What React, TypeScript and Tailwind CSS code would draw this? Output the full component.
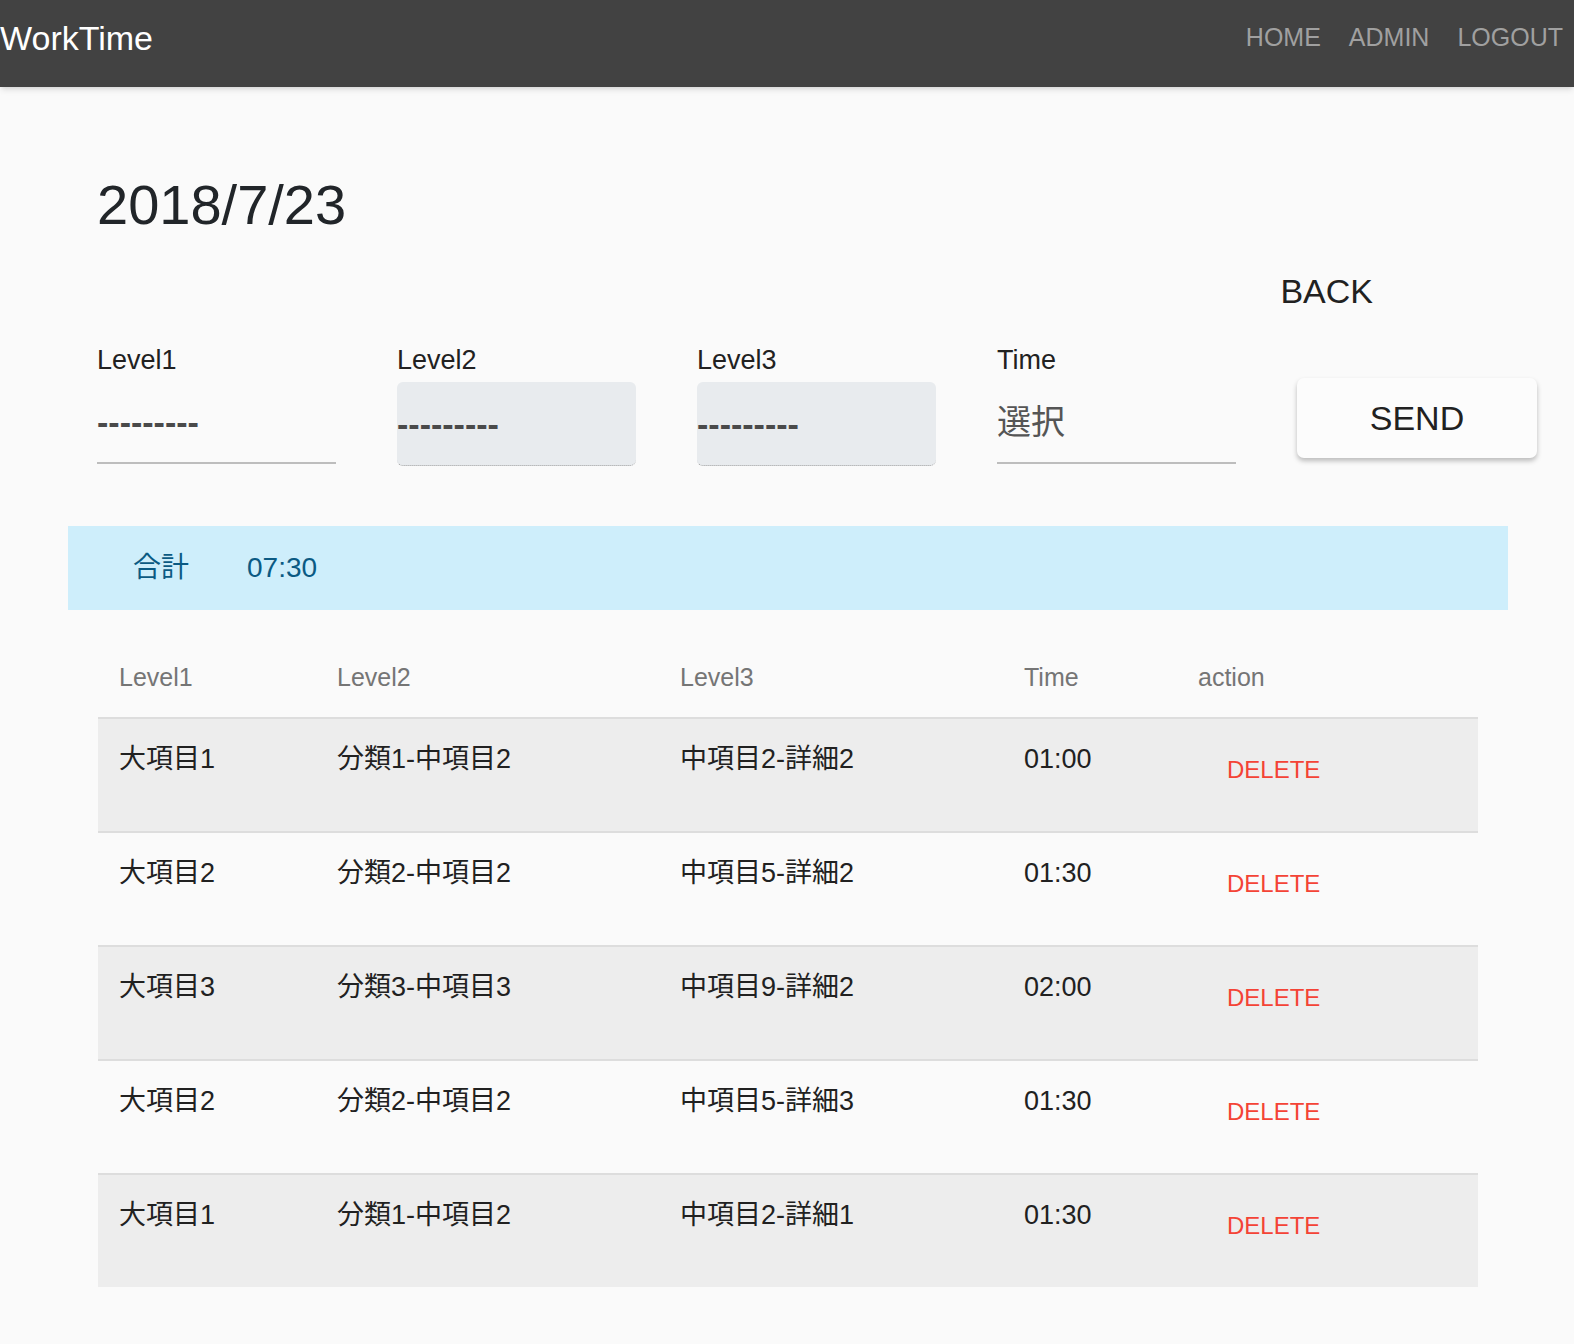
const rows = [
  { l1: '大項目1', l2: '分類1-中項目2', l3: '中項目2-詳細2', time: '01:00' },
  { l1: '大項目2', l2: '分類2-中項目2', l3: '中項目5-詳細2', time: '01:30' },
  { l1: '大項目3', l2: '分類3-中項目3', l3: '中項目9-詳細2', time: '02:00' },
  { l1: '大項目2', l2: '分類2-中項目2', l3: '中項目5-詳細3', time: '01:30' },
  { l1: '大項目1', l2: '分類1-中項目2', l3: '中項目2-詳細1', time: '01:30' },
];

const cols = 'grid grid-cols-[218px_343px_344px_174px_1fr]';

function Field({ label, value, disabled, dashed }: { label: string; value: string; disabled?: boolean; dashed?: boolean }) {
  const text = dashed ? 'font-bold text-[#4a4a4a]' : 'text-[#555]';
  return (
    <div className="flex flex-col">
      <label className="text-[27px] leading-[32px] text-[#212121]">{label}</label>
      <div
        className={
          disabled
            ? `mt-[6px] flex h-[84px] items-center rounded-[6px] border-b border-dotted border-[#9e9e9e] bg-[#e8ebee] text-[34px] leading-[34px] ${text}`
            : `mt-[6px] flex h-[82px] items-center border-b-2 border-[#bdbdbd] text-[34px] leading-[34px] ${text}`
        }
      >
        {value}
      </div>
    </div>
  );
}

export default function App() {
  return (
    <div
      className="min-h-screen bg-[#fafafa]"
      style={{ fontFamily: '"Liberation Sans", "Noto Sans CJK JP", sans-serif' }}
    >
      <header className="flex h-[87px] items-start justify-between bg-[#424242] shadow-md">
        <div className="pt-[18px] text-[34px] leading-[40px] text-white">WorkTime</div>
        <nav className="flex gap-[28px] pr-[11px] pt-[22px] text-[25px] leading-[30px] text-[#a0a0a0]">
          <a href="#">HOME</a>
          <a href="#">ADMIN</a>
          <a href="#">LOGOUT</a>
        </nav>
      </header>

      <h1 className="pl-[97px] pt-[90px] text-[56px] leading-[56px] text-[#212529]">2018/7/23</h1>

      <div className="mt-[38px] flex justify-end pr-[201px]">
        <button className="text-[34px] leading-[40px] text-[#212121]">BACK</button>
      </div>

      <div className="mt-[33px] grid grid-cols-[239px_239px_239px_239px_240px] gap-x-[61px] pl-[97px]">
        <Field label="Level1" value="---------" dashed />
        <Field label="Level2" value="---------" dashed disabled />
        <Field label="Level3" value="---------" dashed disabled />
        <Field label="Time" value="選択" />
        <div className="pt-[34px]">
          <button className="h-[80px] w-full rounded-[7px] bg-[#fcfcfc] text-[34px] text-[#212121] shadow-[0_3px_5px_rgba(0,0,0,0.25)]">
            SEND
          </button>
        </div>
      </div>

      <div className="ml-[68px] mt-[60px] flex h-[84px] w-[1440px] items-center gap-[58px] bg-[#ceeefb] pl-[65px] text-[28px] text-[#0b5a83]">
        <span>合計</span>
        <span>07:30</span>
      </div>

      <div className="ml-[98px] mt-[30px] w-[1380px]">
        <div className={`${cols} h-[77px] pt-[22px] text-[25px] leading-[30px] text-[#757575]`}>
          <div className="pl-[21px]">Level1</div>
          <div className="pl-[21px]">Level2</div>
          <div className="pl-[21px]">Level3</div>
          <div className="pl-[21px]">Time</div>
          <div className="pl-[21px]">action</div>
        </div>
        {rows.map((r, i) => (
          <div
            key={i}
            className={`${cols} h-[114px] border-t-2 border-[#dddddd] text-[27px] leading-[32px] text-[#212121] ${
              i % 2 === 0 ? 'bg-[#ededed]' : ''
            }`}
          >
            <div className="pl-[21px] pt-[24px]">{r.l1}</div>
            <div className="pl-[21px] pt-[24px]">{r.l2}</div>
            <div className="pl-[21px] pt-[24px]">{r.l3}</div>
            <div className="pl-[21px] pt-[24px]">{r.time}</div>
            <div className="pl-[50px] pt-[34px]">
              <button className="text-[24px] leading-[28px] text-[#f44336]">DELETE</button>
            </div>
          </div>
        ))}
      </div>
    </div>
  );
}
